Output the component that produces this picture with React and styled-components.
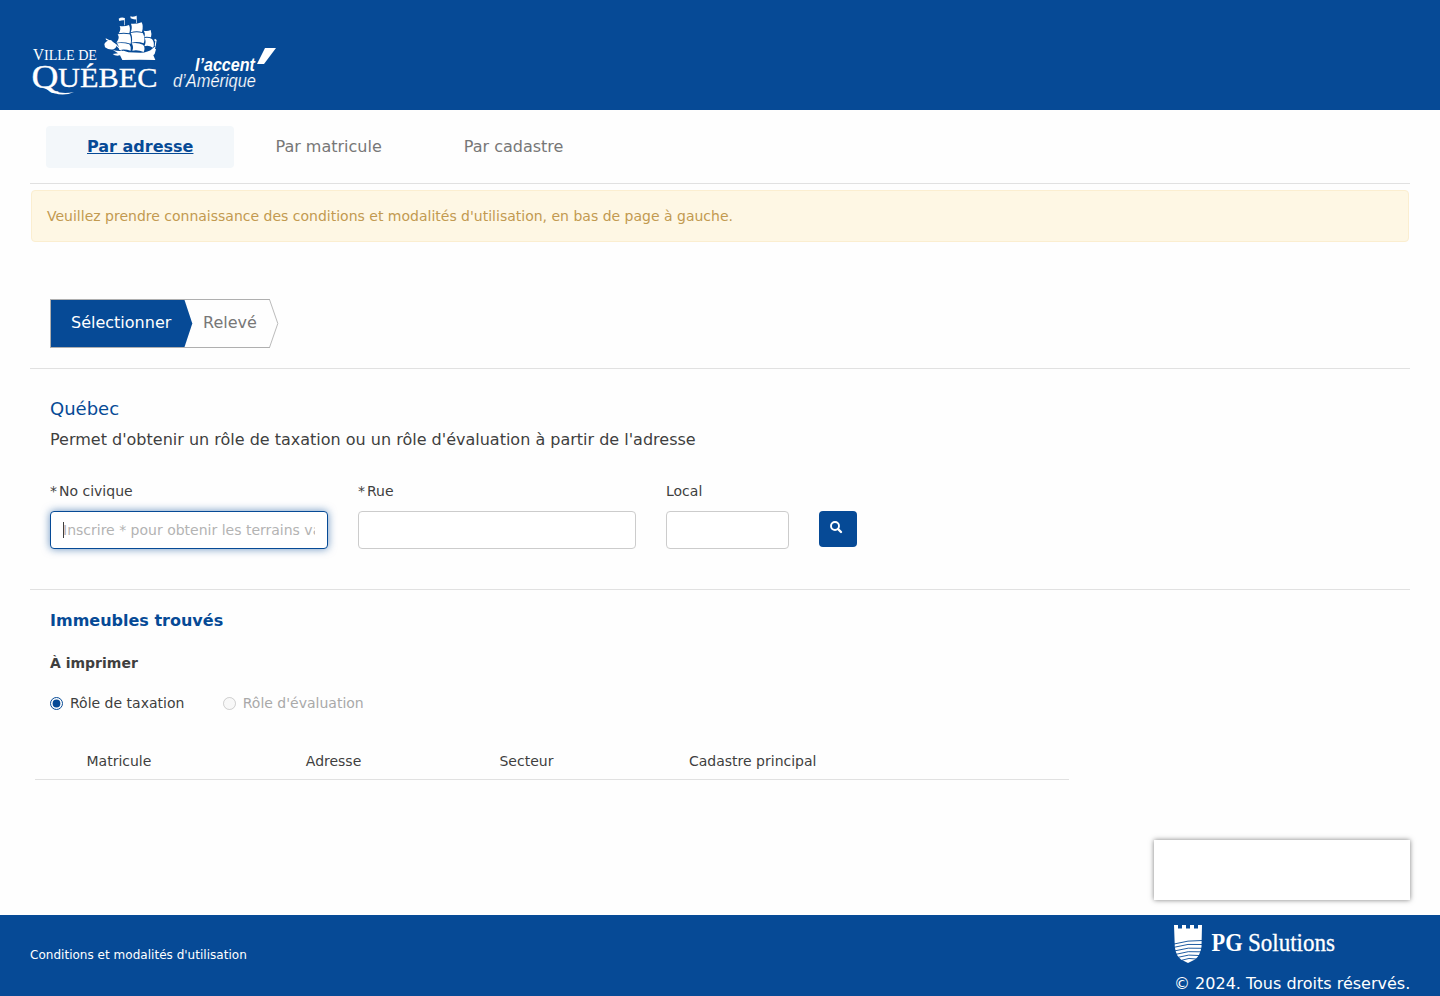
import React from 'react';
import styled, { createGlobalStyle } from 'styled-components';

const BLUE = '#064a96';

const GlobalStyle = createGlobalStyle`
  * { box-sizing: border-box; }
  body { margin: 0; background: #fefefe; }
  body, input, button {
    font-family: "DejaVu Sans", sans-serif;
    font-size: 14px;
    color: #3f3f3f;
  }
`;

const Page = styled.div`
  display: flex;
  flex-direction: column;
  height: 996px;
  overflow: hidden;
`;

const Header = styled.header`
  flex: none;
  height: 110px;
  background: ${BLUE};
`;

const HeaderLogo = styled.svg`
  display: block;
  width: 290px;
  height: 110px;
`;

const Main = styled.main`
  display: flex;
  flex-direction: column;
  flex: 1;
  padding: 0 30px;
`;

const Tabs = styled.nav`
  display: flex;
  height: 74px;
  padding: 16px 16px 0;
  border-bottom: 1px solid #e1e1e1;
`;

const Tab = styled.a`
  height: 42px;
  padding: 0 41px;
  border-radius: 4px;
  font-size: 16px;
  line-height: 41px;
  white-space: nowrap;
  color: ${(p) => (p.$active ? BLUE : '#777')};
  background: ${(p) => (p.$active ? '#f3f7fa' : 'transparent')};
  font-weight: ${(p) => (p.$active ? 700 : 400)};
  text-decoration: ${(p) => (p.$active ? 'underline' : 'none')};
`;

const Notice = styled.div`
  height: 52px;
  margin: 6px 1px 0;
  padding: 0 15px;
  border: 1px solid #fbeed0;
  border-radius: 4px;
  background: #fef7e4;
  color: #c29a50;
  line-height: 50px;
`;

const StepSection = styled.section`
  height: 127px;
  padding: 57px 20px 0;
  border-bottom: 1px solid #e1e1e1;
`;

const Stepper = styled.ol`
  display: flex;
  width: 220px;
  height: 49px;
  margin: 0;
  padding: 0;
  list-style: none;
  border: 1px solid #afafaf;
  border-right: 0;
`;

const Step = styled.li`
  position: relative;
  width: ${(p) => p.$width}px;
  padding-left: 20px;
  font-size: 16px;
  line-height: 45px;
  color: ${(p) => (p.$active ? '#fff' : '#777')};
  background: ${(p) => (p.$active ? BLUE : 'transparent')};
`;

const Arrow = styled.svg`
  position: absolute;
  top: -1px;
  left: 100%;
  width: 10px;
  height: 49px;
  overflow: visible;
`;

const SearchSection = styled.section`
  height: 221px;
  padding: 28px 20px 0;
  border-bottom: 1px solid #e1e1e1;
`;

const Title = styled.h1`
  margin: 0;
  font-size: 18px;
  line-height: 24px;
  font-weight: 400;
  color: ${BLUE};
`;

const Lead = styled.p`
  margin: 7px 0 0;
  font-size: 16px;
  line-height: 24px;
`;

const Form = styled.form`
  display: flex;
  align-items: flex-end;
  gap: 30px;
  margin-top: 29px;
`;

const Field = styled.div`
  width: ${(p) => p.$width}px;
`;

const Label = styled.label`
  display: flex;
  gap: 2px;
  height: 20px;
  margin-bottom: 10px;
  line-height: 20px;
`;

const InputWrap = styled.div`
  position: relative;
  height: 38px;
`;

const Input = styled.input`
  display: block;
  width: 100%;
  height: 38px;
  padding: 0 12px;
  border: 1px solid ${(p) => (p.$active ? BLUE : '#ccc')};
  border-radius: 4px;
  background: #fff;
  outline: none;
  box-shadow: ${(p) => (p.$active ? '0 0 8px rgba(6, 74, 150, 0.6)' : 'none')};
  &::placeholder { color: #b3b3b3; opacity: 1; }
`;

const Caret = styled.span`
  position: absolute;
  left: 13px;
  top: 11px;
  width: 1px;
  height: 16px;
  background: #3f3f3f;
`;

const SearchButton = styled.button`
  display: flex;
  align-items: flex-start;
  width: 38px;
  height: 36px;
  margin-bottom: 2px;
  padding: 10px 0 0 11px;
  border: 0;
  border-radius: 4px;
  background: ${BLUE};
  svg { flex: none; width: 13px; height: 13px; }
`;

const Results = styled.section`
  padding: 20px 20px 0;
`;

const ResultsTitle = styled.h2`
  margin: 0;
  font-size: 16px;
  line-height: 22px;
  color: ${BLUE};
`;

const PrintTitle = styled.h3`
  margin: 21px 0 0;
  font-size: 14px;
  line-height: 20px;
`;

const Options = styled.div`
  display: flex;
  gap: 38.4px;
  margin-top: 20px;
`;

const Option = styled.label`
  display: flex;
  align-items: center;
  gap: 7px;
  height: 20px;
  line-height: 20px;
  color: ${(p) => (p.$disabled ? '#a9a9a9' : '#3f3f3f')};
`;

const Radio = styled.input`
  width: 13px;
  height: 13px;
  margin: 1px 0 0;
  accent-color: ${BLUE};
`;

const TableHead = styled.div`
  display: grid;
  grid-template-columns: 219.3px 193.7px 189.5px 1fr;
  width: 1034px;
  height: 37px;
  margin: 30px 0 0 -15px;
  padding-left: 51.5px;
  border-bottom: 1px solid #e1e1e1;
  line-height: 36px;
`;

const Panel = styled.div`
  align-self: flex-end;
  width: 256px;
  height: 60px;
  margin-top: auto;
  margin-bottom: 15px;
  background: #fff;
  box-shadow: 0 0 5px rgba(0, 0, 0, 0.5);
`;

const Footer = styled.footer`
  display: flex;
  flex: none;
  justify-content: space-between;
  height: 81px;
  padding: 0 30px;
  background: ${BLUE};
  color: #fff;
`;

const Terms = styled.a`
  font-size: 12px;
  line-height: 80px;
  letter-spacing: 0.025px;
`;

const Credits = styled.div`
  width: 236px;
  padding-top: 10px;
`;

const PGLogo = styled.svg`
  display: block;
  width: 170px;
  height: 39px;
`;

const Copyright = styled.div`
  margin-top: 10px;
  font-size: 16px;
  line-height: 20px;
  white-space: nowrap;
`;

const Ship = () => (
  <g transform="translate(98 10) scale(.33333)" fill="#fff">
    <path d="M62 26Q70 21 80 24L79 31Q71 30 64 33ZM97 19Q104 22 114 18L115 28Q106 29 98 25Z" />
    <path d="M79 24h2v22h-2zM115 17h2v22h-2z" />
    <path d="M65 48Q79 51 93 45Q98 54 94 70Q76 67 62 70Q70 58 65 48Z" />
    <path d="M99 41Q114 43 131 37Q137 48 132 66Q115 61 98 67Q104 53 99 41Z" />
    <path d="M59 73Q77 69 95 73Q101 84 98 101Q76 94 55 98Q67 84 59 73Z" />
    <path d="M98 69Q116 65 134 69Q143 83 137 100Q119 93 101 98Q105 81 98 69Z" />
    <path d="M137 62Q149 65 158 60Q162 72 159 82Q149 79 139 81Q143 70 137 62Z" />
    <path d="M140 84Q152 82 162 87Q172 100 165 113Q151 104 139 109Q146 95 140 84Z" />
    <path d="M57 100Q74 97 94 103Q100 110 98 122Q80 116 64 120Q64 109 57 100Z" />
    <path d="M101 100Q119 97 135 104Q143 113 137 126Q119 118 103 122Q108 111 101 100Z" />
    <path d="M19 102Q24 91 39 90Q47 99 55 105Q57 112 47 118Q33 121 21 112Z" />
    <path d="M23 85l9 4 22 13 18 19-3 1-17-18-28-15z" />
    <path d="M45 120Q58 124 77 122L91 127L128 128Q151 127 163 116L173 108L171 116L174 118L170 132L166 136L172 150Q126 148 73 150L66 136Q52 139 44 132L60 130Z" />
    <path d="M171 86l5 4-3 19-3-1 2-15-4-2z" />
  </g>
);

export default function App() {
  return (
    <>
      <GlobalStyle />
      <Page>
        <Header>
          <HeaderLogo viewBox="0 0 290 110" role="img" aria-label="Ville de Québec">
            <Ship />
            <g fill="#fff" fontFamily="'Liberation Serif', serif">
              <text x="33" y="60" fontSize="16.5" textLength="11" lengthAdjust="spacingAndGlyphs">V</text>
              <text x="44" y="60" fontSize="13.6" textLength="53" lengthAdjust="spacingAndGlyphs">ILLE DE</text>
              <g stroke="#fff" strokeWidth=".3">
                <text x="31.5" y="88" fontSize="34" textLength="27" lengthAdjust="spacingAndGlyphs">Q</text>
                <text x="58" y="87.3" fontSize="28" textLength="99.5" lengthAdjust="spacingAndGlyphs">UÉBEC</text>
              </g>
              <path d="M45 86.5Q58 95.500 74 92Q64 96.500 54 93L43 87.500Z" />
            </g>
            <g fill="#fff" fontFamily="'Liberation Sans', sans-serif" fontStyle="italic">
              <text x="195" y="71" fontSize="18" fontWeight="700" textLength="60" lengthAdjust="spacingAndGlyphs">l’accent</text>
              <text x="173" y="87" fontSize="17.5" textLength="83" lengthAdjust="spacingAndGlyphs" stroke={BLUE} strokeWidth=".2">d’Amérique</text>
            </g>
            <path d="M265 48H276L264 64H257Z" fill="#fff" />
          </HeaderLogo>
        </Header>

        <Main>
          <Tabs>
            <Tab $active>Par adresse</Tab>
            <Tab>Par matricule</Tab>
            <Tab>Par cadastre</Tab>
          </Tabs>
          <Notice>
            Veuillez prendre connaissance des conditions et modalités d'utilisation, en bas de page à gauche.
          </Notice>

          <StepSection>
            <Stepper>
              <Step $active $width={132}>
                Sélectionner
                <Arrow viewBox="0 0 10 49">
                  <path d="M0 1H1.5L9.3 24.5L1.5 48H0Z" fill={BLUE} />
                </Arrow>
              </Step>
              <Step $width={87}>
                Relevé
                <Arrow viewBox="0 0 10 49">
                  <path d="M-.5 .5L7.800 24.5L-.5 48.5" fill="none" stroke="#bbb" />
                </Arrow>
              </Step>
            </Stepper>
          </StepSection>

          <SearchSection>
            <Title>Québec</Title>
            <Lead>Permet d'obtenir un rôle de taxation ou un rôle d'évaluation à partir de l'adresse</Lead>
            <Form>
              <Field $width={278}>
                <Label htmlFor="civique"><span>*</span><span>No civique</span></Label>
                <InputWrap>
                  <Input id="civique" $active placeholder="Inscrire * pour obtenir les terrains vacants" />
                  <Caret />
                </InputWrap>
              </Field>
              <Field $width={278}>
                <Label htmlFor="rue"><span>*</span><span>Rue</span></Label>
                <Input id="rue" />
              </Field>
              <Field $width={123}>
                <Label htmlFor="local">Local</Label>
                <Input id="local" />
              </Field>
              <SearchButton type="button" aria-label="Rechercher">
                <svg viewBox="0 0 13 13" fill="none" stroke="#fff">
                  <circle cx="5" cy="5" r="4" strokeWidth="1.9" />
                  <path d="M8 8l3 3" strokeWidth="2.4" strokeLinecap="round" />
                </svg>
              </SearchButton>
            </Form>
          </SearchSection>

          <Results>
            <ResultsTitle>Immeubles trouvés</ResultsTitle>
            <PrintTitle>À imprimer</PrintTitle>
            <Options>
              <Option>
                <Radio type="radio" name="role" defaultChecked />
                Rôle de taxation
              </Option>
              <Option $disabled>
                <Radio type="radio" name="role" disabled />
                Rôle d'évaluation
              </Option>
            </Options>
            <TableHead>
              <span>Matricule</span>
              <span>Adresse</span>
              <span>Secteur</span>
              <span>Cadastre principal</span>
            </TableHead>
          </Results>
          <Panel />
        </Main>

        <Footer>
          <Terms>Conditions et modalités d'utilisation</Terms>
          <Credits>
            <PGLogo viewBox="0 0 170 39" role="img" aria-label="PG Solutions">
              <path
                fill="#fff"
                d="M0 0H4V3.5H8V0H12V3.5H16V0H20V3.5H24V0H28L27.500 22Q26 31 21 34.500L14 38L7 34.500Q2 31 .8 22Z"
              />
              <g fill="none" stroke={BLUE} strokeWidth=".9">
                <path d="M0 19Q14 15 28 15.5M0 22.300Q14 18 28 19.5M1 25.8Q14 21.8 28 23.300M2 29.300Q14 25.300 27 26.8M4 32.300Q15 28.8 25 30.5M8 35.200Q15 32.300 22 34" />
              </g>
              <g fill="#fff" fontFamily="'Liberation Serif', serif">
                <text x="37.5" y="26" fontSize="25" fontWeight="700" textLength="31" lengthAdjust="spacingAndGlyphs">PG</text>
                <text x="74" y="26" fontSize="25" textLength="87" lengthAdjust="spacingAndGlyphs" stroke="#fff" strokeWidth=".3">Solutions</text>
              </g>
            </PGLogo>
            <Copyright>© 2024. Tous droits réservés.</Copyright>
          </Credits>
        </Footer>
      </Page>
    </>
  );
}
